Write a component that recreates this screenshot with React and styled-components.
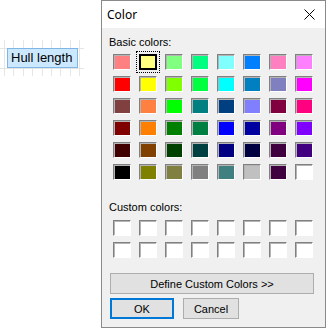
import React from "react";
import styled, { createGlobalStyle } from "styled-components";

const GlobalStyle = createGlobalStyle`
  html, body {
    margin: 0;
    padding: 0;
    background: #ffffff;
    font-family: "Liberation Sans", Arial, sans-serif;
  }
`;

const Page = styled.div`
  display: flex;
  align-items: flex-start;
  width: 328px;
  height: 329px;
  overflow: hidden;
`;

const Sheet = styled.div`
  width: 101px;
  flex-shrink: 0;
  padding-top: 40px;
`;

const GridStrip = styled.div`
  width: 84px;
  height: 36px;
  box-sizing: border-box;
  padding: 8px 0 0 7px;
  background-image:
    linear-gradient(#e4e4e4, #e4e4e4),
    linear-gradient(#e4e4e4, #e4e4e4),
    repeating-linear-gradient(90deg, transparent 0 4px, #e6e6e6 4px 5px, transparent 5px 9.4px);
  background-size: 100% 1px, 100% 1px, 100% 100%;
  background-position: 0 8px, 0 28px, 0 0;
  background-repeat: no-repeat;
`;

const CellTag = styled.div`
  width: 71px;
  height: 20px;
  box-sizing: border-box;
  background: #cce8ff;
  border: 1px solid #7fb6e6;
  font-size: 13px;
  line-height: 18px;
  padding-left: 3px;
  color: #000;
  white-space: nowrap;
`;

const Dialog = styled.div`
  width: 225px;
  height: 328px;
  box-sizing: border-box;
  border: 1px solid #8a8a8a;
  display: flex;
  flex-direction: column;
  flex-shrink: 0;
`;

const TitleBar = styled.div`
  height: 27px;
  background: #ffffff;
  display: flex;
  align-items: center;
  justify-content: space-between;
  padding: 0 10px 0 5px;
`;

const Title = styled.span`
  font-family: "Noto Sans", "Open Sans", sans-serif;
  font-size: 12px;
  color: #000;
`;

const Body = styled.div`
  flex: 1;
  background: #f0f0f0;
  padding: 8px 0 0 7px;
  display: flex;
  flex-direction: column;
  align-items: flex-start;
`;

const Label = styled.div`
  font-size: 11px;
  line-height: 13px;
  color: #000;
  margin-top: ${(p) => p.$top || 0}px;
`;

const SwatchGrid = styled.div`
  display: grid;
  grid-template-columns: repeat(8, 18px);
  grid-auto-rows: 16px;
  column-gap: 8px;
  row-gap: 6px;
  margin: ${(p) => p.$top}px 0 0 4px;
`;

const Swatch = styled.div`
  box-sizing: border-box;
  background: ${(p) => p.$color};
  border: 1px solid;
  border-color: #808080 #ffffff #ffffff #808080;
  box-shadow: inset 1px 1px 0 #b4b4b4;
  ${(p) =>
    p.$selected &&
    `
    border: 2px solid #000;
    box-shadow: none;
    outline: 1px dotted #000;
    outline-offset: 2px;
  `}
`;

const Button = styled.button`
  box-sizing: border-box;
  height: 21px;
  width: ${(p) => p.$width}px;
  background: #e1e1e1;
  border: ${(p) => (p.$default ? "2px solid #0078d7" : "1px solid #adadad")};
  font-family: "Liberation Sans", Arial, sans-serif;
  font-size: 11px;
  color: #000;
  padding: 0;
  cursor: default;
`;

const WideButton = styled(Button)`
  margin: 15px 0 0 1px;
`;

const ButtonRow = styled.div`
  display: flex;
  gap: 9px;
  margin: 4px 0 0 1px;
`;

const basic = [
  "#FF8080", "#FFFF80", "#80FF80", "#00FF80", "#80FFFF", "#0080FF", "#FF80C0", "#FF80FF",
  "#FF0000", "#FFFF00", "#80FF00", "#00FF40", "#00FFFF", "#0080C0", "#8080C0", "#FF00FF",
  "#804040", "#FF8040", "#00FF00", "#008080", "#004080", "#8080FF", "#800040", "#FF0080",
  "#800000", "#FF8000", "#008000", "#008040", "#0000FF", "#0000A0", "#800080", "#8000FF",
  "#400000", "#804000", "#004000", "#004040", "#000080", "#000040", "#400040", "#400080",
  "#000000", "#808000", "#808040", "#808080", "#408080", "#C0C0C0", "#400040", "#FFFFFF",
];

const CloseIcon = () => (
  <svg width="11" height="11" viewBox="0 0 11 11">
    <path d="M0.5 0.5 L10.5 10.5 M10.5 0.5 L0.5 10.5" stroke="#000" strokeWidth="1" />
  </svg>
);

export default function App() {
  return (
    <>
      <GlobalStyle />
      <Page>
        <Sheet>
          <GridStrip>
            <CellTag>Hull length</CellTag>
          </GridStrip>
        </Sheet>
        <Dialog>
          <TitleBar>
            <Title>Color</Title>
            <CloseIcon />
          </TitleBar>
          <Body>
            <Label>Basic colors:</Label>
            <SwatchGrid $top={5}>
              {basic.map((c, i) => (
                <Swatch key={i} $color={c} $selected={i === 1} />
              ))}
            </SwatchGrid>
            <Label $top={21}>Custom colors:</Label>
            <SwatchGrid $top={6}>
              {Array.from({ length: 16 }).map((_, i) => (
                <Swatch key={i} $color="#ffffff" />
              ))}
            </SwatchGrid>
            <WideButton $width={204}>Define Custom Colors &gt;&gt;</WideButton>
            <ButtonRow>
              <Button $width={64} $default>OK</Button>
              <Button $width={56}>Cancel</Button>
            </ButtonRow>
          </Body>
        </Dialog>
      </Page>
    </>
  );
}
